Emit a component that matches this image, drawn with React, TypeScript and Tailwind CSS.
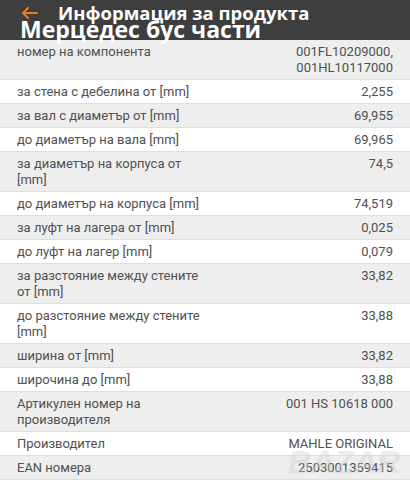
import React from "react";

type Row = { label: string; value: string };

const rows: Row[] = [
  { label: "номер на компонента", value: "001FL10209000, 001HL10117000" },
  { label: "за стена с дебелина от [mm]", value: "2,255" },
  { label: "за вал с диаметър от [mm]", value: "69,955" },
  { label: "до диаметър на вала [mm]", value: "69,965" },
  { label: "за диаметър на корпуса от [mm]", value: "74,5" },
  { label: "до диаметър на корпуса [mm]", value: "74,519" },
  { label: "за луфт на лагера от [mm]", value: "0,025" },
  { label: "до луфт на лагер [mm]", value: "0,079" },
  { label: "за разстояние между стените от [mm]", value: "33,82" },
  { label: "до разстояние между стените [mm]", value: "33,88" },
  { label: "ширина от [mm]", value: "33,82" },
  { label: "широчина до [mm]", value: "33,88" },
  { label: "Артикулен номер на производителя", value: "001 HS 10618 000" },
  { label: "Производител", value: "MAHLE ORIGINAL" },
  { label: "EAN номера", value: "2503001359415" },
];

export default function App() {
  return (
    <div className="relative w-[410px] h-[480px] overflow-hidden bg-white" style={{ fontFamily: "Roboto, 'Noto Sans', sans-serif" }}>
      <div className="relative h-[40px] bg-[#3e3e3e]">
        <div className="flex items-start pl-[21px] pt-[2px]">
          <svg width="17" height="12" viewBox="0 0 17 12" className="mt-[5px]">
            <path d="M16 6H2M7 1L2 6l5 5" fill="none" stroke="#f07d1c" strokeWidth="1.8" strokeLinecap="round" strokeLinejoin="round" />
          </svg>
          <div className="ml-[20px] text-white font-bold text-[18.5px] leading-[22px]" style={{ fontFamily: "'Open Sans', sans-serif" }}>
            Информация за продукта
          </div>
        </div>
        <div className="absolute left-[20px] top-[14px] text-white font-bold text-[23px] leading-[30px] whitespace-nowrap" style={{ fontFamily: "'Open Sans', sans-serif" }}>
          Мерцедес бус части
        </div>
      </div>
      <div className="flex flex-col">
        {rows.map((r, i) => (
          <div
            key={i}
            className={`flex justify-between border-b border-[#dedede] px-[17px] pt-[4px] pb-[3px] text-[13px] leading-[16px] text-[#505050] ${i % 2 === 0 ? "bg-[#eeeeee]" : "bg-white"}`}
          >
            <div className="w-[190px]">{r.label}</div>
            <div className="w-[110px] text-right">{r.value}</div>
          </div>
        ))}
      </div>
      <div className="absolute right-[10px] top-[438px] text-[32px] font-bold text-[#d0d0d0] opacity-40 italic" style={{ fontFamily: "'Liberation Sans', sans-serif" }}>
        BAZAR
      </div>
    </div>
  );
}
